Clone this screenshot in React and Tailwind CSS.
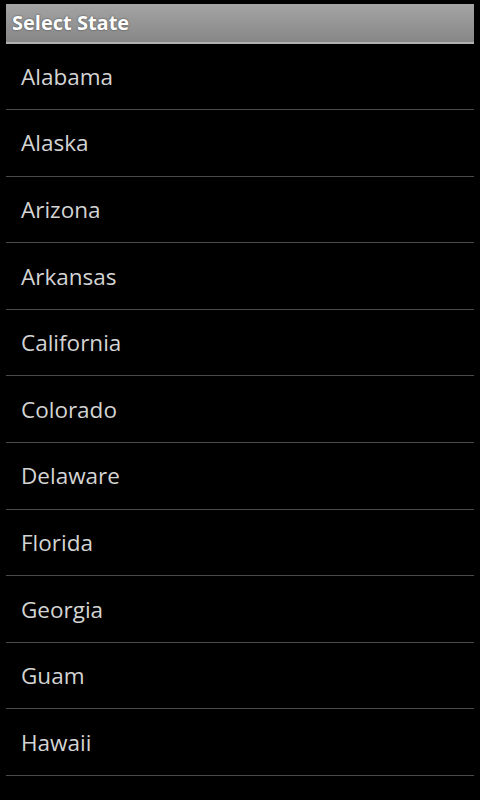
import React from 'react';

const states = [
  'Alabama',
  'Alaska',
  'Arizona',
  'Arkansas',
  'California',
  'Colorado',
  'Delaware',
  'Florida',
  'Georgia',
  'Guam',
  'Hawaii',
];

export default function App() {
  return (
    <div
      className="w-[480px] h-[800px] bg-black overflow-hidden px-[6px] pt-[4px]"
      style={{ fontFamily: '"Open Sans", "DejaVu Sans", sans-serif' }}
    >
      <div className="h-[40px] flex items-center px-[6px] bg-gradient-to-b from-[#a4a4a4] to-[#878787] border-b-2 border-[#b0b0b0]">
        <span className="text-[20px] font-bold text-white [text-shadow:0_0_2px_rgba(0,0,0,0.6)]">
          Select State
        </span>
      </div>
      <ul>
        {states.map((s, i) => (
          <li
            key={s}
            className={`flex items-center pl-[15px] pt-[1px] border-b border-[#4a4a4a] text-[22.5px] text-[#d4d4d4] ${
              i === 0 ? 'h-[66px]' : 'h-[66.6px]'
            }`}
          >
            {s}
          </li>
        ))}
      </ul>
    </div>
  );
}
